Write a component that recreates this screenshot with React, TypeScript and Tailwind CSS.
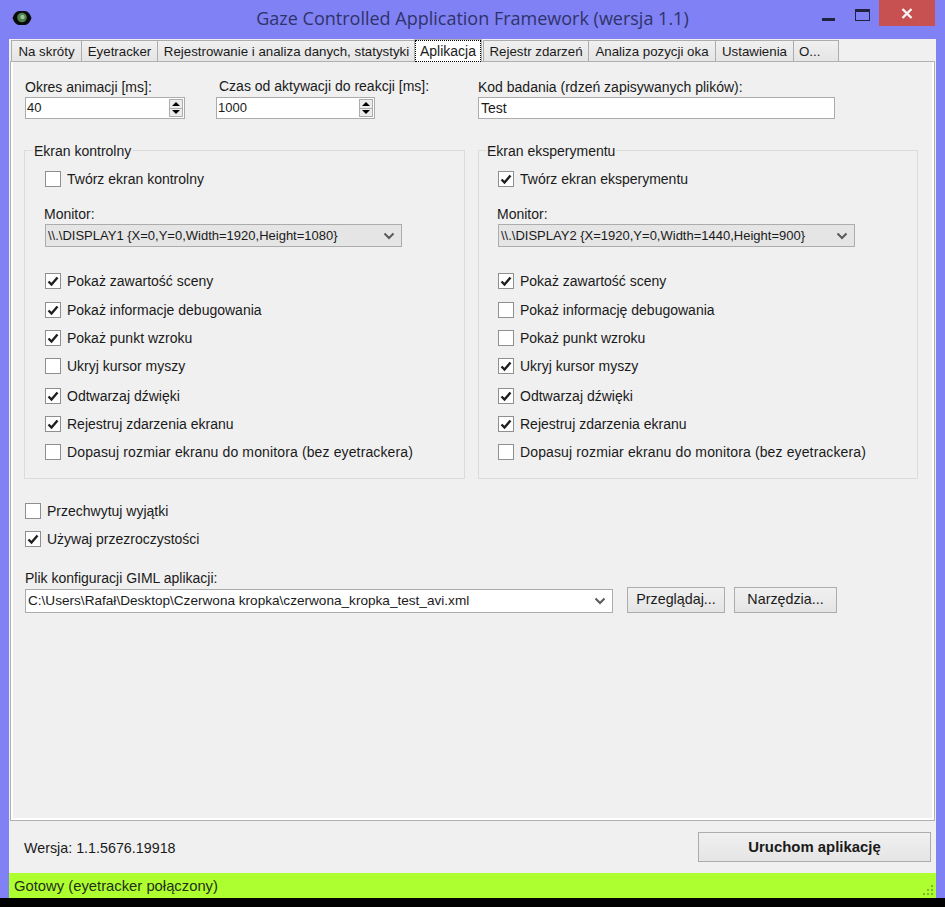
import React from 'react';

const tabs = [
  { label: 'Na skróty', w: 'w-[71px]' },
  { label: 'Eyetracker', w: 'w-[77px]' },
  { label: 'Rejestrowanie i analiza danych, statystyki', w: 'w-[259px]' },
  { label: 'Aplikacja', w: 'w-[68px]', active: true },
  { label: 'Rejestr zdarzeń', w: 'w-[106px]' },
  { label: 'Analiza pozycji oka', w: 'w-[128px]' },
  { label: 'Ustawienia', w: 'w-[79px]' },
  { label: 'O...', w: 'w-[46px] justify-start pl-[5px]' },
];

const Check: React.FC<{ label: string; checked?: boolean; className?: string }> = ({
  label,
  checked,
  className = '',
}) => (
  <div className={`flex items-center h-[28px] gap-[6px] ${className}`}>
    <div className="w-[16px] h-[16px] shrink-0 bg-white border border-[#8e8f8f] flex items-center justify-center">
      {checked && (
        <svg width="12" height="12" viewBox="0 0 12 12">
          <path d="M1.5 6.5 L4.5 9.5 L10.5 2.5" fill="none" stroke="#1f1f1f" strokeWidth="2.4" />
        </svg>
      )}
    </div>
    <span className="pt-px whitespace-nowrap">{label}</span>
  </div>
);

const Chevron = () => (
  <svg width="12" height="8" viewBox="0 0 12 8">
    <path d="M1.5 1.5 L6 6 L10.5 1.5" fill="none" stroke="#5a5a5a" strokeWidth="2" />
  </svg>
);

const Spinner: React.FC<{ value: string; w: string }> = ({ value, w }) => (
  <div className={`flex items-center h-[22px] ${w} bg-white border border-[#ababab] pr-[1px] text-[13px]`}>
    <span className="flex-1 pl-px">{value}</span>
    <div className="flex flex-col w-[14px] h-[18px] border border-[#acacac] bg-[#ececec]">
      <div className="flex-1 flex items-center justify-center border-b border-[#acacac]">
        <div className="w-0 h-0 border-x-[4px] border-x-transparent border-b-[4px] border-b-black" />
      </div>
      <div className="flex-1 flex items-center justify-center">
        <div className="w-0 h-0 border-x-[4px] border-x-transparent border-t-[4px] border-t-black" />
      </div>
    </div>
  </div>
);

type Row = { label: string; checked?: boolean; cls?: string };

const Group: React.FC<{
  title: string;
  create: string;
  createChecked: boolean;
  display: string;
  rows: Row[];
  w: string;
  pad: string;
  titleLeft: string;
}> = ({ title, create, createChecked, display, rows, w, pad, titleLeft }) => (
  <div className={`relative h-[329px] ${w} ${pad} border border-[#dcdcdc] pt-[14px]`}>
    <span className={`absolute -top-[7px] ${titleLeft} px-px bg-[#f0f0f0] leading-[15px]`}>{title}</span>
    <Check label={create} checked={createChecked} />
    <div className="mt-[13px] -ml-px h-[18px] leading-[17px]">Monitor:</div>
    <div className="flex items-center justify-between w-[357px] h-[23px] bg-[#e5e5e5] border border-[#acacac] pl-[2px] pr-[6px] text-[13px]">
      <span>{display}</span>
      <Chevron />
    </div>
    <div className="mt-[20px]">
      {rows.map((r) => (
        <Check key={r.label} label={r.label} checked={r.checked} className={r.cls ?? ''} />
      ))}
    </div>
  </div>
);

export default function App() {
  return (
    <div className="w-[945px] h-[907px] bg-black overflow-hidden text-[14px] text-[#1a1a1a] font-['Liberation_Sans',sans-serif]">
      <div className="h-[898px] bg-[#8081f5] flex flex-col">
        {/* title bar */}
        <div className="relative h-[39px] shrink-0 flex items-center justify-center pb-[2px]">
          <svg className="absolute left-[12px] top-[10px]" width="20" height="16" viewBox="0 0 20 16">
            <path d="M0.5 8 Q3 1 7 1 L13 1 Q17 1 19.5 8 Q17 15 13 15 L7 15 Q3 15 0.5 8 Z" fill="#0a0a0a" />
            <circle cx="10" cy="7.5" r="4.8" fill="#4c7f4a" />
            <circle cx="10.5" cy="7" r="2.2" fill="#9cc29a" />
          </svg>
          <span className="font-['Open_Sans',sans-serif] text-[18px] text-[#2f3369]">
            Gaze Controlled Application Framework (wersja 1.1)
          </span>
          <div className="absolute left-[822px] top-[18px] w-[13px] h-[3px] bg-[#20223f]" />
          <div className="absolute left-[855px] top-[9px] w-[15px] h-[12px] border border-[#20223f] border-t-[3px]" />
          <div className="absolute left-[879px] top-0 w-[56px] h-[26px] bg-[#c75050] flex items-center justify-center">
            <svg width="12" height="11" viewBox="0 0 12 11">
              <path d="M1.5 1 L10.5 10 M10.5 1 L1.5 10" stroke="#f5f5f5" strokeWidth="2.4" />
            </svg>
          </div>
        </div>

        {/* client area */}
        <div className="mx-[9px] flex-1 flex flex-col bg-[#f0f0f0]">
          <div className="h-[22px] flex items-end pl-[2px] shrink-0 bg-[#f0f0f0] text-[13.3px]">
            {tabs.map((t) =>
              t.active ? (
                <div
                  key={t.label}
                  className={`${t.w} h-[23px] -mb-px -mt-px relative z-10 bg-white border border-b-0 border-[#b0b0b0] flex items-center justify-center text-[14px] -ml-px mr-px`}
                >
                  <span className="w-full h-full flex items-center justify-center border border-dotted border-black">{t.label}</span>
                </div>
              ) : (
                <div
                  key={t.label}
                  className={`flex items-center justify-center ${t.w} h-[21px] -mr-px pt-px bg-gradient-to-b from-[#f0f0f0] to-[#e5e5e5] border border-b-0 border-[#acacac] whitespace-nowrap`}
                >
                  {t.label}
                </div>
              ),
            )}
          </div>

          {/* tab page */}
          <div className="ml-px mr-px h-[760px] shrink-0 border border-[#b0b0b0] bg-[#f0f0f0] shadow-[inset_2px_0_0_#fff,inset_-2px_-2px_0_#fff]">
            <div className="flex pt-[18px]">
              <div className="ml-[14px] w-[160px]">
                <div className="h-[17px] leading-[15px]">Okres animacji [ms]:</div>
                <Spinner value="40" w="w-[160px]" />
              </div>
              <div className="ml-[31px] w-[159px]">
                <div className="h-[17px] leading-[13px] pl-[3px] whitespace-nowrap">Czas od aktywacji do reakcji [ms]:</div>
                <Spinner value="1000" w="w-[159px]" />
              </div>
              <div className="ml-[103px] w-[357px]">
                <div className="h-[17px] leading-[15px]">Kod badania (rdzeń zapisywanych plików):</div>
                <div className="h-[22px] bg-white border border-[#ababab] pl-[2px] flex items-center">Test</div>
              </div>
            </div>

            <div className="flex mt-[31px] ml-[13px] gap-[13px]">
              <Group
                title="Ekran kontrolny"
                create="Twórz ekran kontrolny"
                createChecked={false}
                display="\\.\DISPLAY1 {X=0,Y=0,Width=1920,Height=1080}"
                w="w-[441px]"
                pad="pl-[20px]"
                titleLeft="left-[8px]"
                rows={[
                  { label: 'Pokaż zawartość sceny', checked: true },
                  { label: 'Pokaż informacje debugowania', checked: true, cls: 'mt-px' },
                  { label: 'Pokaż punkt wzroku', checked: true },
                  { label: 'Ukryj kursor myszy' },
                  { label: 'Odtwarzaj dźwięki', checked: true, cls: 'mt-[2px]' },
                  { label: 'Rejestruj zdarzenia ekranu', checked: true },
                  { label: 'Dopasuj rozmiar ekranu do monitora (bez eyetrackera)', cls: 'tracking-[0.13px]' },
                ]}
              />
              <Group
                title="Ekran eksperymentu"
                create="Twórz ekran eksperymentu"
                createChecked
                display="\\.\DISPLAY2 {X=1920,Y=0,Width=1440,Height=900}"
                w="w-[440px]"
                pad="pl-[19px]"
                titleLeft="left-[7px]"
                rows={[
                  { label: 'Pokaż zawartość sceny', checked: true },
                  { label: 'Pokaż informację debugowania', cls: 'mt-px' },
                  { label: 'Pokaż punkt wzroku' },
                  { label: 'Ukryj kursor myszy', checked: true },
                  { label: 'Odtwarzaj dźwięki', checked: true, cls: 'mt-[2px]' },
                  { label: 'Rejestruj zdarzenia ekranu', checked: true },
                  { label: 'Dopasuj rozmiar ekranu do monitora (bez eyetrackera)', cls: 'tracking-[0.13px]' },
                ]}
              />
            </div>

            <div className="ml-[14px] mt-[18px]">
              <Check label="Przechwytuj wyjątki" />
              <Check label="Używaj przezroczystości" checked />
            </div>

            <div className="ml-[14px] mt-[17px] h-[17px] leading-[17px]">Plik konfiguracji GIML aplikacji:</div>
            <div className="ml-[14px] flex items-start">
              <div className="mt-[2px] w-[588px] h-[24px] bg-white border border-[#ababab] pl-[2px] pr-[6px] flex items-center justify-between text-[13.6px]">
                <span>C:\Users\Rafał\Desktop\Czerwona kropka\czerwona_kropka_test_avi.xml</span>
                <Chevron />
              </div>
              <button className="ml-[14px] w-[98px] h-[26px] border border-[#acacac] bg-gradient-to-b from-[#f0f0f0] to-[#e5e5e5] text-[14.3px]">
                Przeglądaj...
              </button>
              <button className="ml-[9px] w-[103px] h-[26px] border border-[#acacac] bg-gradient-to-b from-[#f0f0f0] to-[#e5e5e5] text-[14.3px]">
                Narzędzia...
              </button>
            </div>
          </div>

          {/* footer */}
          <div className="h-[52px] shrink-0 flex items-center justify-between pl-[15px] pr-[5px]">
            <span className="mt-[3px] text-[14.3px]">Wersja: 1.1.5676.19918</span>
            <button className="w-[233px] h-[30px] border border-[#acacac] bg-gradient-to-b from-[#f0f0f0] to-[#e5e5e5] font-bold text-[14.9px]">
              Uruchom aplikację
            </button>
          </div>

          {/* status bar */}
          <div className="relative flex-1 bg-[#adff2f] flex items-center pl-[5px] pt-px text-[14.8px] text-[#24301a]">
            Gotowy (eyetracker połączony)
            <svg className="absolute right-[2px] bottom-[2px]" width="12" height="12" viewBox="0 0 12 12">
              <path d="M9 1h2v2H9zM5 5h2v2H5zM9 5h2v2H9zM1 9h2v2H1zM5 9h2v2H5zM9 9h2v2H9z" fill="#7fb82a" />
            </svg>
          </div>
        </div>
      </div>
    </div>
  );
}
